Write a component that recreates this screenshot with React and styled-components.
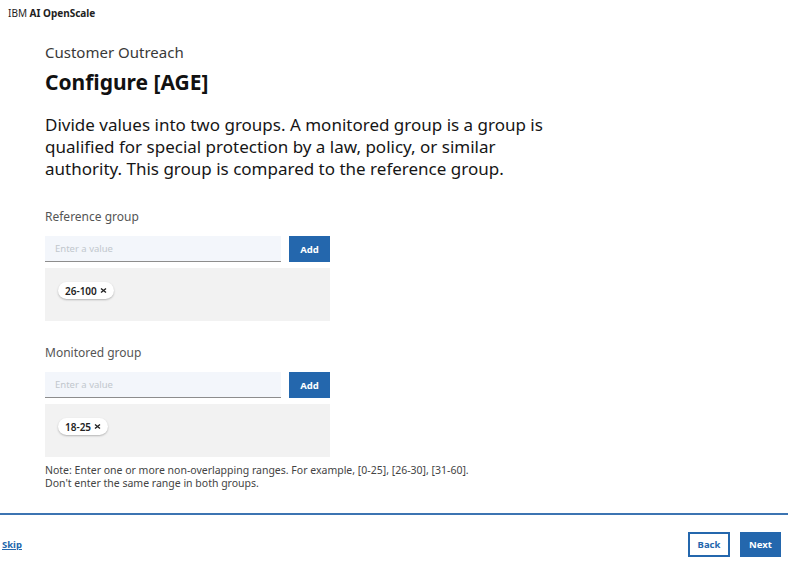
import styled, { createGlobalStyle } from "styled-components";

const Global = createGlobalStyle`
html, body {
  margin: 0;
  padding: 0;
  background: #fff;
  font-family: "Noto Sans", "Open Sans", sans-serif;
  color: #161616;
}
`

const Page = styled.div`
width: 788px;
height: 573px;
display: flex;
flex-direction: column;
overflow: hidden;
`
const TopBar = styled.div`
height: 26px;
padding: 6px 0 0 8px;
box-sizing: border-box;
font-size: 10px;
color: #222;
& > b {
  font-weight: 700;
}
`
const Main = styled.div`
flex: 1;
padding: 16px 0 0 45px;
display: flex;
flex-direction: column;
`
const Eyebrow = styled.div`
font-size: 15px;
color: #393939;
line-height: 20px;
`
const Heading = styled.h1`
margin: 5px 0 0;
font-size: 21px;
font-weight: 700;
line-height: 30px;
color: #111;
`
const Intro = styled.p`
margin: 17px 0 0;
width: 520px;
font-size: 17px;
line-height: 22px;
color: #161616;
`
const Group = styled.div`
margin-top: ${p => p.$top}px;
width: 285px;
`
const Label = styled.div`
font-size: 12px;
color: #555;
line-height: 16px;
`
const InputRow = styled.div`
margin-top: 11px;
display: flex;
gap: 8px;
align-items: flex-start;
`
const Input = styled.input`
width: 236px;
height: 26px;
box-sizing: border-box;
border: none;
border-bottom: 1px solid #8d8d8d;
background: #f3f6fb;
padding: 0 10px;
font-family: inherit;
font-size: 9.5px;
outline: none;
&::placeholder {
  color: #c1c7cd;
}
`
const BlueButton = styled.button`
height: ${p => p.$h || 25}px;
width: ${p => p.$w || 41}px;
box-sizing: border-box;
border: 2px solid #2467ad;
background: ${p => (p.$outline ? "#fff" : "#2467ad")};
color: ${p => (p.$outline ? "#2467ad" : "#fff")};
font-family: inherit;
font-size: 9.5px;
font-weight: 700;
padding: 0;
cursor: pointer;
`
const TagBox = styled.div`
margin-top: 6px;
height: 53px;
background: #f2f2f2;
padding: 14px 13px 0;
box-sizing: border-box;
display: flex;
align-items: flex-start;
`
const Tag = styled.span`
display: inline-flex;
align-items: center;
gap: 3px;
height: 17px;
padding: 0 7px;
border-radius: 9px;
background: #fff;
box-shadow: 0 1px 2px rgba(0, 0, 0, 0.25);
font-size: 10px;
font-weight: 600;
color: #222;
`
const Note = styled.div`
margin-top: 7px;
font-size: 10.5px;
line-height: 13px;
color: #444;
`
const Footer = styled.div`
border-top: 2px solid #3c74b2;
height: 60px;
display: flex;
align-items: center;
justify-content: space-between;
padding: 0 7px 0 2px;
box-sizing: border-box;
`
const Skip = styled.a`
font-size: 9.5px;
font-weight: 700;
color: #2467ad;
text-decoration: underline;
`
const Actions = styled.div`
display: flex;
gap: 10px;
`

const Close = () => (
    <svg width="7" height="7" viewBox="0 0 7 7">
        <path d="M1 1.5L6 5.5M6 1.5L1 5.5" stroke="#222" strokeWidth="1.4" />
    </svg>
)

const groups = [
    { label: "Reference group", tag: "26-100", top: 29 },
    { label: "Monitored group", tag: "18-25", top: 24 },
]

const App = () => {
    return (
        <Page>
            <Global />
            <TopBar>IBM <b>AI OpenScale</b></TopBar>
            <Main>
                <Eyebrow>Customer Outreach</Eyebrow>
                <Heading>Configure [AGE]</Heading>
                <Intro>
                    Divide values into two groups. A monitored group is a group is qualified for special
                    protection by a law, policy, or similar authority. This group is compared to the reference group.
                </Intro>
                {groups.map((g, index) => (
                    <Group key={index} $top={g.top}>
                        <Label>{g.label}</Label>
                        <InputRow>
                            <Input placeholder="Enter a value" />
                            <BlueButton $w={41} $h={26}>Add</BlueButton>
                        </InputRow>
                        <TagBox>
                            <Tag>{g.tag} <Close /></Tag>
                        </TagBox>
                    </Group>
                ))}
                <Note>
                    Note: Enter one or more non-overlapping ranges. For example, [0-25], [26-30], [31-60].<br />
                    Don't enter the same range in both groups.
                </Note>
            </Main>
            <Footer>
                <Skip href="#">Skip</Skip>
                <Actions>
                    <BlueButton $outline $w={42} $h={25}>Back</BlueButton>
                    <BlueButton $w={41} $h={25}>Next</BlueButton>
                </Actions>
            </Footer>
        </Page>
    );
}

export default App;
